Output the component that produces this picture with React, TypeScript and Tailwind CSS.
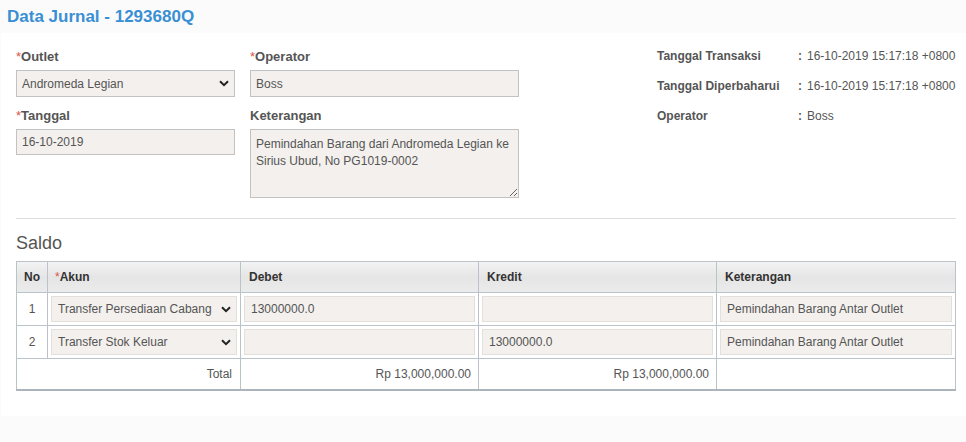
import React from "react";

const FONT = { fontFamily: '"Liberation Sans", Arial, sans-serif' };

function Chevron() {
  return (
    <svg width="10" height="7" viewBox="0 0 10 7" className="shrink-0">
      <path d="M1 1.2 L5 5.2 L9 1.2" fill="none" stroke="#222" strokeWidth="2" />
    </svg>
  );
}

function Label({ text, required }: { text: string; required?: boolean }) {
  return (
    <div className="mb-[3px] text-[13px] font-bold leading-[20px] text-[#555]">
      {required && <span className="font-normal text-[#d9534f]">*</span>}
      {text}
    </div>
  );
}

function FieldBox({ children, select }: { children: React.ReactNode; select?: boolean }) {
  return (
    <div className="flex h-[27px] items-center justify-between border border-[#c2c2c2] bg-[#f3f0ed] pl-[5px] pr-[5px] text-[12px] text-[#555]">
      <span>{children}</span>
      {select && <Chevron />}
    </div>
  );
}

function CellInput({ value, select }: { value?: string; select?: boolean }) {
  return (
    <div className="flex h-[26px] items-center justify-between border border-[#e3e0dc] bg-[#f3f0ed] pl-[6px] pr-[5px] text-[12px] text-[#555]">
      <span className="whitespace-nowrap">{value ?? ""}</span>
      {select && <Chevron />}
    </div>
  );
}

const rows = [
  { no: 1, akun: "Transfer Persediaan Cabang", debet: "13000000.0", kredit: "", ket: "Pemindahan Barang Antar Outlet" },
  { no: 2, akun: "Transfer Stok Keluar", debet: "", kredit: "13000000.0", ket: "Pemindahan Barang Antar Outlet" },
];

const info = [
  ["Tanggal Transaksi", "16-10-2019 15:17:18 +0800"],
  ["Tanggal Diperbaharui", "16-10-2019 15:17:18 +0800"],
  ["Operator", "Boss"],
];

export default function App() {
  return (
    <div className="h-[442px] w-[966px] overflow-hidden bg-[#fbfbfb]" style={FONT}>
      <div className="h-[33px] px-[7px] pt-[7px] text-[17px] font-bold leading-[20px] text-[#3a8fd4]">
        Data Jurnal - 1293680Q
      </div>

      <div className="ml-px h-[383px] bg-white px-[15px]">
        <div className="flex">
          <div className="w-[219px] shrink-0 pt-[14px]">
            <Label text="Outlet" required />
            <FieldBox select>Andromeda Legian</FieldBox>
            <div className="mt-[9px]">
              <Label text="Tanggal" required />
              <div className="flex h-[26px] items-center border border-[#c2c2c2] bg-[#f3f0ed] pl-[5px] text-[12px] text-[#555]">
                16-10-2019
              </div>
            </div>
          </div>

          <div className="ml-[15px] w-[269px] shrink-0 pt-[14px]">
            <Label text="Operator" required />
            <FieldBox>Boss</FieldBox>
            <div className="mt-[9px]">
              <Label text="Keterangan" />
              <textarea
                readOnly
                defaultValue="Pemindahan Barang dari Andromeda Legian ke Sirius Ubud, No PG1019-0002"
                className="block h-[69px] w-full resize border border-[#c2c2c2] bg-[#f3f0ed] px-[5px] pt-[6px] text-[12px] leading-[17px] text-[#555] outline-none"
                style={FONT}
              />
            </div>
          </div>

          <div className="ml-[138px] shrink-0 pt-[8px]">
            {info.map(([k, v]) => (
              <div key={k} className="flex whitespace-nowrap text-[12px] leading-[30px] text-[#555]">
                <span className="w-[141px] shrink-0 font-bold">{k}</span>
                <span className="w-[9px] shrink-0 font-bold">:</span>
                <span>{v}</span>
              </div>
            ))}
          </div>
        </div>

        <div className="mt-[20px] w-[940px] border-t border-[#dedede]" />

        <div className="mt-[12px] text-[18px] leading-[24px] text-[#555]">Saldo</div>

        <table className="mt-[6px] w-[939px] table-fixed border-collapse text-[12px] text-[#555]">
          <colgroup>
            <col className="w-[31px]" />
            <col className="w-[193px]" />
            <col className="w-[238px]" />
            <col className="w-[238px]" />
            <col className="w-[239px]" />
          </colgroup>
          <thead>
            <tr className="h-[31px] bg-gradient-to-b from-[#f3f3f3] via-[#e5e5e5] to-[#ececec] text-left font-bold text-[#333]">
              <th className="border border-[#b9c3c9] text-center">No</th>
              <th className="border border-[#b9c3c9] px-[7px]">
                <span className="font-normal text-[#d9534f]">*</span>Akun
              </th>
              <th className="border border-[#b9c3c9] px-[8px]">Debet</th>
              <th className="border border-[#b9c3c9] px-[8px]">Kredit</th>
              <th className="border border-[#b9c3c9] px-[8px]">Keterangan</th>
            </tr>
          </thead>
          <tbody>
            {rows.map((r) => (
              <tr key={r.no} className="h-[32px]">
                <td className="border border-[#b9c3c9] text-center">{r.no}</td>
                <td className="border border-[#b9c3c9] p-[3px]">
                  <CellInput value={r.akun} select />
                </td>
                <td className="border border-[#b9c3c9] p-[3px]">
                  <CellInput value={r.debet} />
                </td>
                <td className="border border-[#b9c3c9] p-[3px]">
                  <CellInput value={r.kredit} />
                </td>
                <td className="border border-[#b9c3c9] p-[3px]">
                  <CellInput value={r.ket} />
                </td>
              </tr>
            ))}
            <tr className="h-[31px]">
              <td colSpan={2} className="border border-b-2 border-[#b9c3c9] border-b-[#aab4ba] pr-[8px] text-right">
                Total
              </td>
              <td className="border border-b-2 border-[#b9c3c9] border-b-[#aab4ba] pr-[7px] text-right">
                Rp 13,000,000.00
              </td>
              <td className="border border-b-2 border-[#b9c3c9] border-b-[#aab4ba] pr-[7px] text-right">
                Rp 13,000,000.00
              </td>
              <td className="border border-b-2 border-[#b9c3c9] border-b-[#aab4ba]" />
            </tr>
          </tbody>
        </table>
      </div>
    </div>
  );
}
